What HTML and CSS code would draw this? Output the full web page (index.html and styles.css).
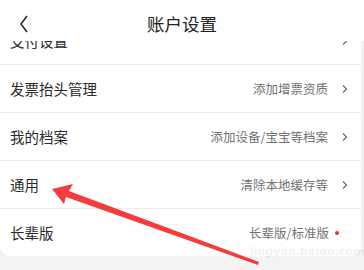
FILE: index.html
```html
<!DOCTYPE html>
<html lang="zh-CN">
<head>
  <meta charset="UTF-8">
  <meta name="viewport" content="width=device-width, initial-scale=1.0">
  <title>账户设置</title>
  <link rel="stylesheet" href="styles.css">
</head>
<body>
  <div class="page">
    <div class="header">
      <svg class="back" width="10" height="20" viewBox="0 0 10 20">
        <path d="M8 2 L2 10 L8 18" fill="none" stroke="#222" stroke-width="1.5"/>
      </svg>
      <div class="title">账户设置</div>
    </div>

    <div class="list">
      <div class="row">
        <span class="label">支付设置</span>
        <span class="chev"><svg width="6" height="8" viewBox="0 0 6 8"><path d="M1 0.5 L4.5 4 L1 7.5" fill="none" stroke="#666" stroke-width="1.1"/></svg></span>
      </div>
      <div class="row">
        <span class="label">发票抬头管理</span>
        <span class="hint">添加增票资质</span>
        <span class="chev"><svg width="6" height="8" viewBox="0 0 6 8"><path d="M1 0.5 L4.5 4 L1 7.5" fill="none" stroke="#666" stroke-width="1.1"/></svg></span>
      </div>
      <div class="row">
        <span class="label">我的档案</span>
        <span class="hint">添加设备/宝宝等档案</span>
        <span class="chev"><svg width="6" height="8" viewBox="0 0 6 8"><path d="M1 0.5 L4.5 4 L1 7.5" fill="none" stroke="#666" stroke-width="1.1"/></svg></span>
      </div>
      <div class="row">
        <span class="label">通用</span>
        <span class="hint">清除本地缓存等</span>
        <span class="chev"><svg width="6" height="8" viewBox="0 0 6 8"><path d="M1 0.5 L4.5 4 L1 7.5" fill="none" stroke="#666" stroke-width="1.1"/></svg></span>
      </div>
      <div class="row last">
        <span class="label">长辈版</span>
        <span class="hint">长辈版/标准版</span>
        <span class="dot"></span>
      </div>
    </div>

    <div class="watermark">jingyan.baidu.com</div>

    <svg class="arrow" width="364" height="270" viewBox="0 0 364 270">
      <polygon points="52,189 73,184 69,191 259,262 258,265 66,197 64,204" fill="#f53c3c"/>
    </svg>
  </div>
</body>
</html>
```

FILE: styles.css
```css
body {
  margin: 0;
  background: #f3f3f3;
  font-family: "Noto Sans CJK SC", "Noto Sans", sans-serif;
  color: #333;
}

.page {
  position: relative;
  width: 364px;
  height: 270px;
  overflow: hidden;
}

.header {
  position: absolute;
  top: 0;
  left: 0;
  right: 0;
  height: 41px;
  background: #fff;
  display: flex;
  align-items: center;
  justify-content: center;
  z-index: 2;
}

.back {
  position: absolute;
  left: 19px;
  top: 14px;
}

.title {
  font-size: 17.5px;
  color: #222;
  margin-top: 6px;
}

.list {
  margin-top: 17px;
  margin-right: 3px;
  background: #fff;
  border-radius: 0 0 10px 10px;
}

.row {
  display: flex;
  align-items: center;
  height: 47px;
  padding: 0 13px 0 10px;
  border-bottom: 1px solid #ececec;
}

.row.last {
  border-bottom: none;
}

.label {
  flex: 1;
  font-size: 14.5px;
  color: #2a2a2a;
}

.hint {
  font-size: 12.5px;
  color: #727272;
}

.chev {
  display: flex;
  margin-left: 14px;
}

.dot {
  width: 4px;
  height: 4px;
  border-radius: 50%;
  background: #e03030;
  margin: 0 9px 0 6px;
}

.watermark {
  position: absolute;
  left: 250px;
  top: 245px;
  font-family: "DejaVu Sans", sans-serif;
  font-size: 11px;
  font-weight: bold;
  color: rgba(0, 0, 0, 0.07);
}

.arrow {
  position: absolute;
  top: 0;
  left: 0;
  z-index: 3;
}
```
